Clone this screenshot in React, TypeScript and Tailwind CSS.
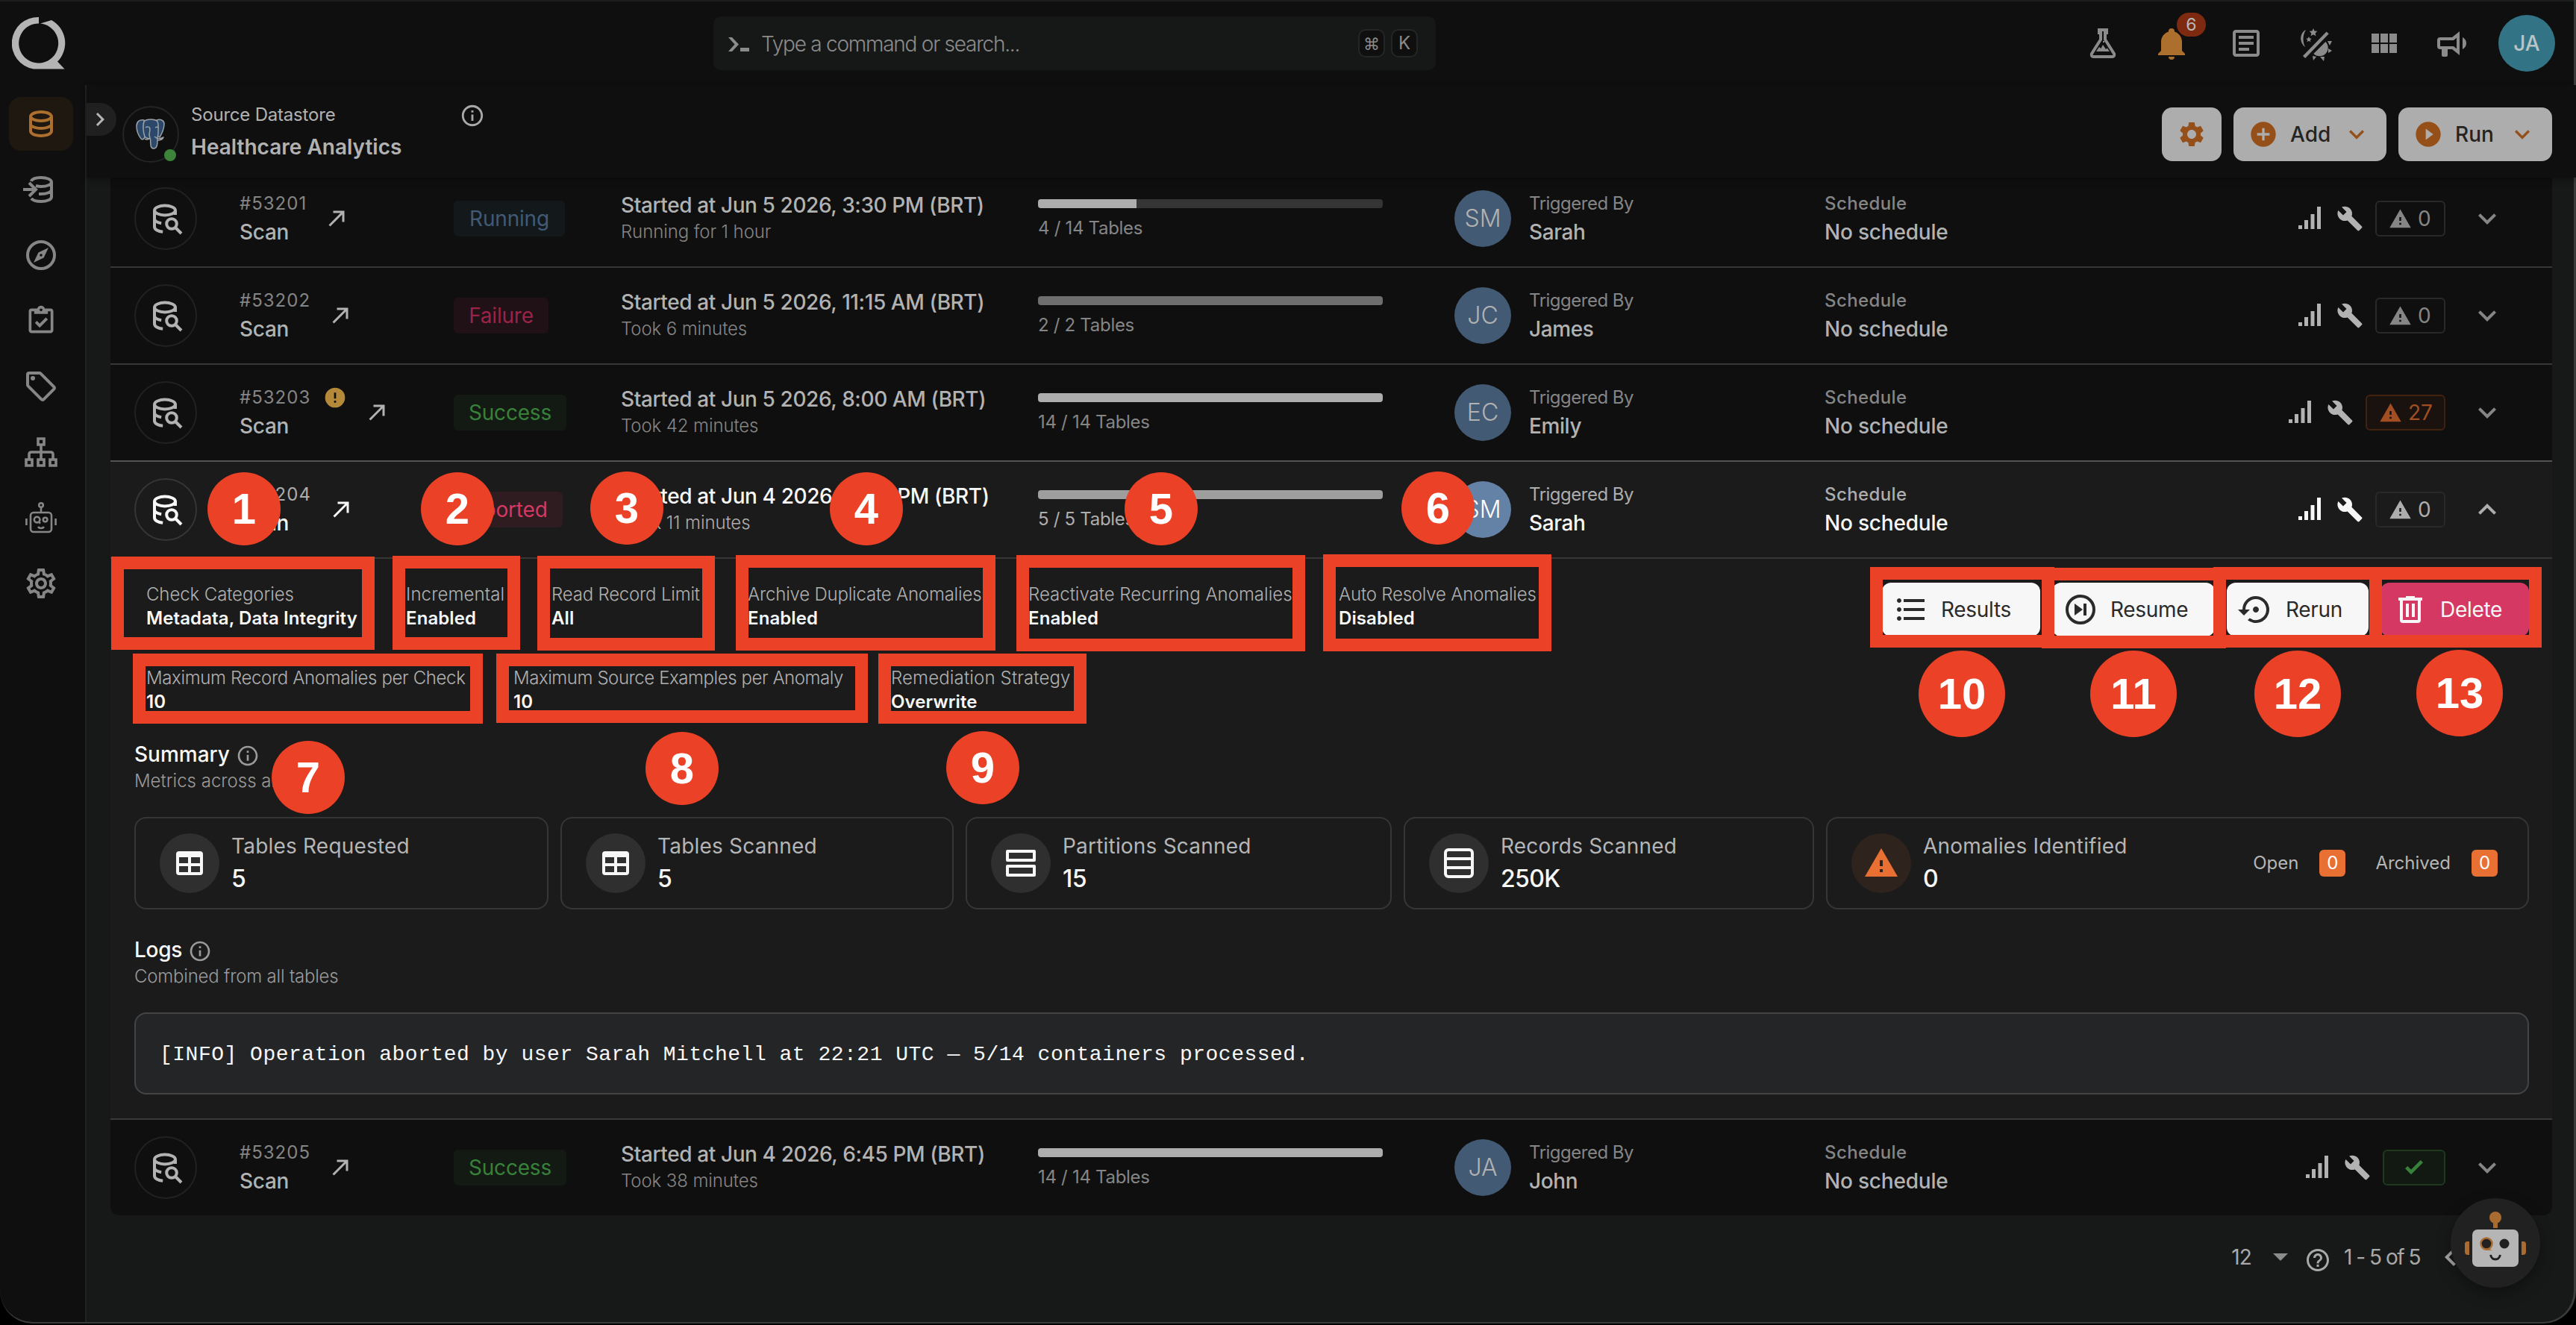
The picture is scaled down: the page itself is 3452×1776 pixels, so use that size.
import type { ReactNode } from "react";
import clsx from "clsx";
import {
  MdBuild,
  MdFormatListBulleted,
  MdHelpOutline,
  MdInfoOutline,
  MdKeyboardArrowDown,
  MdKeyboardArrowUp,
  MdOutlineArticle,
  MdOutlineSettings,
  MdSettings,
  MdSettingsBackupRestore,
  MdWarning
} from "react-icons/md";

type Run = {
  id: string;
  status: string;
  badge: string;
  started: string;
  note: string;
  progress: number;
  bar: string;
  tables: string;
  initials: string;
  user: string;
  anomalies: number | null;
  flagged?: boolean;
  open?: boolean;
};

const runs: Run[] = [
  {
    id: "#53201",
    status: "Running",
    badge: "w-[149px] bg-[#13181b] text-[#415a76]",
    started: "Started at Jun 5 2026, 3:30 PM (BRT)",
    note: "Running for 1 hour",
    progress: 28.6,
    bar: "bg-[#adadad]",
    tables: "4 / 14 Tables",
    initials: "SM",
    user: "Sarah",
    anomalies: 0
  },
  {
    id: "#53202",
    status: "Failure",
    badge: "w-[127px] bg-[#1f1115] text-[#9c2347]",
    started: "Started at Jun 5 2026, 11:15 AM (BRT)",
    note: "Took 6 minutes",
    progress: 100,
    bar: "bg-[#6e6e6e]",
    tables: "2 / 2 Tables",
    initials: "JC",
    user: "James",
    anomalies: 0
  },
  {
    id: "#53203",
    status: "Success",
    badge: "w-[151px] bg-[#131a13] text-[#38813a]",
    started: "Started at Jun 5 2026, 8:00 AM (BRT)",
    note: "Took 42 minutes",
    progress: 100,
    bar: "bg-[#adadad]",
    tables: "14 / 14 Tables",
    initials: "EC",
    user: "Emily",
    anomalies: 27,
    flagged: true
  },
  {
    id: "#53204",
    status: "Aborted",
    badge: "w-[146px] bg-[#2e1c21] text-[#d63864]",
    started: "Started at Jun 4 2026, 10:10 PM (BRT)",
    note: "Took 11 minutes",
    progress: 100,
    bar: "bg-[#9e9e9e]",
    tables: "5 / 5 Tables",
    initials: "SM",
    user: "Sarah",
    anomalies: 0,
    open: true
  },
  {
    id: "#53205",
    status: "Success",
    badge: "w-[151px] bg-[#131a13] text-[#38813a]",
    started: "Started at Jun 4 2026, 6:45 PM (BRT)",
    note: "Took 38 minutes",
    progress: 100,
    bar: "bg-[#adadad]",
    tables: "14 / 14 Tables",
    initials: "JA",
    user: "John",
    anomalies: null
  }
];

const optionRows = [
  [
    { label: "Check Categories", value: "Metadata, Data Integrity", size: "w-[284px] tracking-[-0.1px]" },
    { label: "Incremental", value: "Enabled", size: "w-[131px] tracking-[0.1px]" },
    { label: "Read Record Limit", value: "All", size: "w-[199px] tracking-[-0.2px]" },
    { label: "Archive Duplicate Anomalies", value: "Enabled", size: "w-[312px] tracking-[-0.2px]" },
    { label: "Reactivate Recurring Anomalies", value: "Enabled", size: "w-[352px] tracking-[0px]" },
    { label: "Auto Resolve Anomalies", value: "Disabled", size: "w-[266px] tracking-[-0.2px]" }
  ],
  [
    { label: "Maximum Record Anomalies per Check", value: "10", size: "w-[428px] tracking-[-0.37px]" },
    { label: "Maximum Source Examples per Anomaly", value: "10", size: "w-[442px] tracking-[-0.44px]" },
    { label: "Remediation Strategy", value: "Overwrite", size: "w-[242px] tracking-[0.15px]" }
  ]
];

// Numbered callouts laid over the page
const frames = [
  "left-[149px] top-[746px] h-[125px] w-[353px]",
  "left-[526px] top-[745px] h-[126px] w-[171px]",
  "left-[720px] top-[745px] h-[127px] w-[238px]",
  "left-[986px] top-[744px] h-[128px] w-[348px]",
  "left-[1362px] top-[744px] h-[129px] w-[387px]",
  "left-[1773px] top-[743px] h-[130px] w-[306px]",
  "left-[178px] top-[876px] h-[94px] w-[469px]",
  "left-[665px] top-[876px] h-[93px] w-[498px]",
  "left-[1177px] top-[876px] h-[94px] w-[279px]",
  "left-[2506px] top-[760px] h-[108px] w-[247px]",
  "left-[2736px] top-[761px] h-[108px] w-[247px]",
  "left-[2966px] top-[760px] h-[108px] w-[226px]",
  "left-[3175px] top-[760px] h-[108px] w-[231px]"
];

const markers = [
  "left-[278px] top-[633px]",
  "left-[564px] top-[633px]",
  "left-[791px] top-[632px]",
  "left-[1112px] top-[633px]",
  "left-[1507px] top-[633px]",
  "left-[1878px] top-[632px]",
  "left-[364px] top-[993px]",
  "left-[865px] top-[981px]",
  "left-[1268px] top-[980px]",
  "left-[2571px] top-[872px]",
  "left-[2801px] top-[872px]",
  "left-[3021px] top-[872px]",
  "left-[3238px] top-[871px]"
];

function Svg({ className, box = "0 0 24 24", children }: { className: string; box?: string; children: ReactNode }) {
  return (
    <svg aria-hidden className={clsx("shrink-0", className)} fill="currentColor" viewBox={box}>
      {children}
    </svg>
  );
}

function ScanIcon() {
  return (
    <Svg className="size-12">
      <g fill="none" stroke="currentColor" strokeWidth="2">
        <ellipse cx="11.500" cy="6.500" rx="7" ry="3.200" />
        <path d="M4.500 6.500v11c0 1.800 2.400 3.100 5.600 3.400M4.500 12c0 1.500 1.900 2.700 4.600 3.100M18.500 6.500v3" />
        <circle cx="16" cy="15.500" r="3.400" />
        <path d="m18.500 18 4 4" />
      </g>
    </Svg>
  );
}

function DatabaseIcon({ className }: { className: string }) {
  return (
    <Svg className={className}>
      <path d="M12 3C7.58 3 4 4.79 4 7v10c0 2.21 3.59 4 8 4s8-1.79 8-4V7c0-2.21-3.58-4-8-4m6 14c0 .5-2.13 2-6 2s-6-1.5-6-2v-2.23c1.61.78 3.72 1.23 6 1.23s4.39-.45 6-1.23V17m0-4.55c-1.3.95-3.58 1.55-6 1.55s-4.7-.6-6-1.55V9.64c1.47.83 3.61 1.36 6 1.36s4.53-.53 6-1.36v2.81M12 9C8.13 9 6 7.5 6 7s2.13-2 6-2 6 1.5 6 2-2.13 2-6 2z" />
    </Svg>
  );
}

function Logo() {
  return (
    <Svg box="0 0 72 72" className="size-[72px] text-[#b4b4b4]">
      <path d="M36 1A35 35 0 0 0 29 70.500H70.500L61 60.500A35 35 0 0 0 53 5L38 9.600A26.500 26.500 0 1 1 36 9.500Z" />
    </Svg>
  );
}

function Sidebar() {
  const item = "flex h-[72px] w-[86px] items-center justify-center rounded-2xl";
  return (
    <nav className="flex w-[116px] shrink-0 flex-col items-center gap-4 border-r-2 border-[#232221] bg-[#0f0f0f] pt-4 pr-1 text-[#868686]">
      <span className={clsx(item, "bg-[#1f1811] text-[#ac6f2e]")}>
        <DatabaseIcon className="size-12" />
      </span>
      <span className={item}>
        <Svg className="size-12 overflow-visible">
          <g fill="none" stroke="currentColor" strokeWidth="2">
            <path d="M5.500 6.500C6 4.900 8.700 4 12 4c4 0 7 1.300 7 3s-3 3-7 3c-1.500 0-2.500-.2-3.500-.5M19 7v10c0 1.700-3 3-7 3-3 0-5.600-.8-6.500-2M19 12c0 1.700-3 3-7 3h-1.500" />
            <path d="M0 12h7.500M4 7.500 8.500 12 4 16.500" />
          </g>
        </Svg>
      </span>
      <span className={item}>
        <Svg className="size-12">
          <circle cx="12" cy="12" fill="none" r="9" stroke="currentColor" strokeWidth="2" />
          <path d="m7 17 3.200-6.800L17 7l-3.200 6.800L7 17m5-5.900a.9.9 0 0 0-.9.9.9.9 0 0 0 .9.9.9.9 0 0 0 .9-.9.9.9 0 0 0-.9-.9z" />
        </Svg>
      </span>
      <span className={item}>
        <Svg className="size-11">
          <path d="M19 3h-4.180C14.400 1.840 13.300 1 12 1s-2.400.84-2.820 2H5c-1.100 0-2 .9-2 2v14c0 1.100.9 2 2 2h14c1.100 0 2-.9 2-2V5c0-1.100-.9-2-2-2m-7 0c.55 0 1 .45 1 1s-.45 1-1 1-1-.45-1-1 .45-1 1-1M7 7h10V5h2v14H5V5h2v2m.5 6.500L9 12l2 2 4.500-4.500L17 11l-6 6-3.500-3.500z" />
        </Svg>
      </span>
      <span className={item}>
        <Svg className="size-12">
          <path d="m21.410 11.580-9-9A2 2 0 0 0 11 2H4a2 2 0 0 0-2 2v7a2 2 0 0 0 .59 1.420l9 9A2 2 0 0 0 13 22a2 2 0 0 0 1.410-.59l7-7A2 2 0 0 0 22 13a2 2 0 0 0-.59-1.420M13 20l-9-9V4h7l9 9M6.500 5A1.500 1.500 0 1 1 5 6.500 1.500 1.500 0 0 1 6.500 5z" />
        </Svg>
      </span>
      <span className={item}>
        <Svg className="size-12">
          <g fill="none" stroke="currentColor" strokeWidth="1.800">
            <path d="M10 3h4v4h-4zM2 17h4v4H2zM10 17h4v4h-4zM18 17h4v4h-4zM12 7v10M4 17v-3.500c0-.8.500-1.500 1.500-1.500h13c1 0 1.500.7 1.500 1.500V17" />
          </g>
        </Svg>
      </span>
      <span className={item}>
        <Svg className="size-12">
          <g fill="none" stroke="currentColor" strokeWidth="1.300">
            <rect height="13" rx="2" width="14" x="5" y="8.500" />
            <circle cx="12" cy="3.500" r="1.400" />
            <path d="M12 5v3.500M2.200 12.500v4.500M21.800 12.500v4.500M10 18c.8 1.300 3.200 1.300 4 0" />
            <circle cx="9.300" cy="13.300" r="1.900" />
            <path d="m10.500 14.800 1 1" />
            <circle cx="14.800" cy="13.300" r="1.400" />
          </g>
        </Svg>
      </span>
      <span className={item}>
        <MdOutlineSettings className="size-12" />
      </span>
    </nav>
  );
}

function TopBar() {
  return (
    <header className="flex h-[114px] shrink-0 items-center border-t-2 border-[#1b1c1c] bg-[#0f0f0f] pl-4 text-[#8b8b8b]">
      <Logo />
      <div className="ml-[868px] flex h-[72px] w-[968px] items-center rounded-[10px] bg-[#161817] pr-6 pl-5">
        <Svg box="0 0 28 20" className="mt-1 h-5 w-7">
          <path d="M0 0h5l9 9.500L5 19H0l8.500-9.500z" />
          <path d="M16 14h12v5H16z" />
        </Svg>
        <span className="mt-0.5 ml-4 text-[28px] font-light tracking-[-1.250px]">Type a command or search...</span>
        <kbd className="ml-auto flex h-[38px] w-9 items-center justify-center rounded-[10px] border-2 border-[#242525] bg-[#0f0f0f] font-sans text-[22px]">
          ⌘
        </kbd>
        <kbd className="ml-2 flex h-[38px] w-9 items-center justify-center rounded-[10px] border-2 border-[#242525] bg-[#0f0f0f] font-['Inter',sans-serif] text-[24px]">
          K
        </kbd>
      </div>
      <div className="ml-auto flex items-center pr-7">
        <Svg className="size-12">
          <path
            d="M9.500 3h5v2h-1v4.500l6 9.500c.5 1-.1 2-1.200 2H5.700c-1.100 0-1.700-1-1.200-2l6-9.500V5h-1z"
            fill="none"
            stroke="currentColor"
            strokeWidth="2"
          />
          <path d="m7.500 17.500 2-3 1.200 1 1.300-2.500 2 3 .9-.8 1.600 2.300zM12 10.500h1v1h-1z" />
        </Svg>
        <span className="relative ml-[44px]">
          <Svg className="size-12 text-[#ac6f2e]">
            <path d="M21 19v1H3v-1l2-2v-6c0-3.100 2.030-5.830 5-6.710V4a2 2 0 0 1 4 0v.29c2.970.88 5 3.610 5 6.710v6l2 2m-7 2a2 2 0 0 1-4 0" />
          </Svg>
          <span className="absolute -top-[17px] left-[31px] flex h-8 w-[39px] items-center justify-center rounded-full bg-[#7d2a10] text-[23px] text-[#b9b9b9]">
            6
          </span>
        </span>
        <MdOutlineArticle className="ml-[52px] size-12" />
        <Svg className="ml-[45px] size-12">
          <path d="M5.500 3C1.500 5 .8 11 5 14.500c-1.500-3-2-7.500.5-11.500zM3.500 20.500 19.300 4.200l1.600 1.400L5.100 22z" />
          <path d="m10.500 2 .8 1.700 1.900.2-1.400 1.300.4 1.900-1.700-1-1.700 1 .4-1.900-1.400-1.300 1.900-.2zM7.500 7.500l.6 1.200 1.300.2-1 .9.3 1.300-1.200-.7-1.200.7.3-1.300-1-.9 1.300-.2z" />
          <path d="M18.700 11a5.500 5.500 0 0 1-8 8zM20 10.500l3 0-1.500 3zM20.500 15.500l2.500 1.500-2.500 1.500zM10 20.500l2.500.5L10.500 23.500zM15 21h3L17.500 24z" />
        </Svg>
        <Svg box="0 0 34 26" className="ml-[51px] h-[26px] w-[34px]">
          <path d="M0 0h10v12H0zM12 0h10v12H12zM24 0h10v12H24zM0 14h10v12H0zM12 14h10v12H12zM24 14h10v12H24z" />
        </Svg>
        <Svg className="ml-[50px] size-12">
          <path d="M12 8H4a2 2 0 0 0-2 2v4a2 2 0 0 0 2 2h1v4a1 1 0 0 0 1 1h2a1 1 0 0 0 1-1v-4h3l5 4V4l-5 4m3 7.600L13 14H4v-4h9l2-1.600v7.200m6.500-3.600c0 1.710-.96 3.260-2.500 4V8c1.530.75 2.500 2.300 2.500 4z" />
        </Svg>
        <span className="ml-[38px] flex size-[76px] items-center justify-center rounded-full bg-[#327485] text-[28px] font-medium text-[#b9c4c7]">
          JA
        </span>
      </div>
    </header>
  );
}

function StoreHeader() {
  const button = "flex h-[72px] items-center rounded-[14px] bg-[#adadad] text-[28px] font-medium";
  return (
    <div className="relative z-10 flex h-[124px] shrink-0 items-start bg-[#0f0f0f] pr-[33px] shadow-[0_3px_8px_rgba(0,0,0,0.35)]">
      <span className="mt-6 flex h-11 w-10 items-center justify-center rounded-r-full bg-[#202020] pr-1 text-[#b5b5b5]">
        <MdKeyboardArrowDown className="size-9 -rotate-90" />
      </span>
      <span className="relative mt-7 ml-2 flex size-[76px] items-center justify-center rounded-full border-2 border-[#242424]">
        <Svg box="0 0 40 42" className="h-[42px] w-10">
          <g fill="#2b486b" stroke="#9aa0a6" strokeLinejoin="round" strokeWidth="1.500">
            <path d="M11 2C5 1 1 4 1 10c0 6 3 13 6 17 2 2 4 0 5-2z" />
            <path d="M28 2c6-2 10 1 10 5 0 6-3 13-6 18l-3-2z" />
            <path d="M11 4c3-4 15-4 18 0 2 4 1 10 1 15 0 3-1 5-1 8 0 6 0 13-5 13s-4-6-4.500-13c-2 0-5 0-7.500-3-2-5-3-15-1-20z" />
            <path d="M13 12c2-2 6-1 6 2s-1 5-1 8l1 4c-3 3-6 2-7 1M26 12c2-1 3-1 4 0M25 24c3 3 7 4 12 1-1 3-5 4-8 4" fill="none" />
          </g>
        </Svg>
        <span className="absolute right-0.5 bottom-0 size-4 rounded-full bg-[#3c843a]" />
      </span>
      <div className="mt-5 ml-4 w-[362px] text-[#b2b2b2]">
        <p className="text-[24px] leading-10 tracking-[-0.200px]">Source Datastore</p>
        <p className="mt-px text-[28px] leading-[44px] font-semibold">Healthcare Analytics</p>
      </div>
      <MdInfoOutline className="mt-6 -ml-0.5 size-[34px] text-[#a9a9a9]" />
      <div className="mt-[30px] ml-auto flex gap-4">
        <span className={clsx(button, "w-20 justify-center text-[#95501a]")}>
          <MdSettings className="size-10" />
        </span>
        <span className={clsx(button, "w-[205px] pl-5 text-[#242424]")}>
          <Svg className="size-10 text-[#95501a]">
            <path d="M17 13h-4v4h-2v-4H7v-2h4V7h2v4h4m-5-9A10 10 0 0 0 2 12a10 10 0 0 0 10 10 10 10 0 0 0 10-10A10 10 0 0 0 12 2z" />
          </Svg>
          <span className="ml-4">Add</span>
          <MdKeyboardArrowDown className="mr-5 ml-auto size-10 text-[#95501a]" />
        </span>
        <span className={clsx(button, "w-[206px] pl-5 text-[#242424]")}>
          <Svg className="size-10 text-[#95501a]">
            <path d="M10 16.500v-9l6 4.500M12 2A10 10 0 0 0 2 12a10 10 0 0 0 10 10 10 10 0 0 0 10-10A10 10 0 0 0 12 2z" fillRule="evenodd" />
          </Svg>
          <span className="ml-4">Run</span>
          <MdKeyboardArrowDown className="mr-5 ml-auto size-10 text-[#95501a]" />
        </span>
      </div>
    </div>
  );
}

function AnomalyBox({ count }: { count: number | null }) {
  if (count === null) {
    return (
      <span className="flex h-12 w-[84px] items-center justify-center rounded-md border-2 border-[#1d3a1e] bg-[#121812] text-[#38813a]">
        <Svg className="size-8">
          <path d="m21 7-12 12-6-6 2.500-2.500L9 14 18.500 4.500z" />
        </Svg>
      </span>
    );
  }
  return (
    <span
      className={clsx(
        "flex h-12 items-center rounded-md border-2 pl-4 text-[28px]",
        count > 0 ? "w-[107px] border-[#43210f] bg-[#1a120e] text-[#a04e22]" : "w-[94px] border-[#292929]"
      )}
    >
      <MdWarning className="size-[31px]" />
      <span className="ml-2">{count}</span>
    </span>
  );
}

function RunRow({ run, last }: { run: Run; last?: boolean }) {
  const strong = run.open ? "text-[#f7f7f7]" : "text-[#b2b2b2]";
  const soft = run.open ? "text-[#adadad]" : "text-[#858585]";
  const Chevron = run.open ? MdKeyboardArrowUp : MdKeyboardArrowDown;
  return (
    <div
      className={clsx(
        "grid grid-cols-[141px_287px_224px_559px_558px_100px_396px_1fr] items-center pl-8",
        last ? "h-32 rounded-b-xl" : "h-[130px] border-b-2",
        run.flagged ? "border-[#555555]" : "border-[#363636]",
        run.open ? "bg-[#1b1b1b]" : "bg-[#0f0f0f]"
      )}
    >
      <span
        className={clsx(
          "flex size-[84px] items-center justify-center rounded-full border-2",
          run.open ? "border-[#353535]" : "border-[#212121]",
          strong
        )}
      >
        <ScanIcon />
      </span>
      <div className="flex items-center">
        <div>
          <div className={clsx("flex h-[37px] items-center text-[24px] tracking-[1px]", soft)}>
            {run.id}
            {run.flagged && (
              <Svg className="ml-[17px] size-8 text-[#b5893a]">
                <path d="M13 13h-2V7h2m0 10h-2v-2h2M12 2A10 10 0 0 0 2 12a10 10 0 0 0 10 10 10 10 0 0 0 10-10A10 10 0 0 0 12 2z" />
              </Svg>
            )}
          </div>
          <div className={clsx("text-[28px] leading-[41px] font-medium tracking-[-0.3px]", strong)}>Scan</div>
        </div>
        <Svg className={clsx("ml-[22px] size-9", strong)}>
          <path d="M5 17.590 15.590 7H9V5h10v10h-2V8.410L6.410 19 5 17.590z" />
        </Svg>
      </div>
      <span className={clsx("flex h-12 items-center justify-center rounded-md text-[28px] tracking-[-0.2px]", run.badge)}>
        {run.status}
      </span>
      <div>
        <p className={clsx("text-[28px] leading-9 font-medium tracking-[-0.4px]", strong)}>{run.started}</p>
        <p className={clsx("text-[24px] leading-9 font-light tracking-[-0.1px]", soft)}>{run.note}</p>
      </div>
      <div className="mt-[5px] w-[462px]">
        <div className="h-3 overflow-hidden rounded bg-[#353535]">
          <div className={clsx("h-full", run.bar)} style={{ width: `${run.progress}%` }} />
        </div>
        <p className={clsx("mt-[9px] text-[24px] leading-9 tracking-[-0.3px]", soft)}>{run.tables}</p>
      </div>
      <span
        className={clsx(
          "flex size-[76px] items-center justify-center rounded-full text-[32px] font-light",
          run.open ? "bg-[#6382a6] text-white" : "bg-[#435a74] text-[#b2b2b2]"
        )}
      >
        {run.initials}
      </span>
      <div>
        <p className={clsx("text-[24px] leading-[37px] tracking-[-0.5px]", soft)}>Triggered By</p>
        <p className={clsx("text-[28px] leading-[41px] font-medium tracking-[-0.4px]", strong)}>{run.user}</p>
      </div>
      <div className="flex items-center pr-[63px]">
        <div>
          <p className={clsx("text-[24px] leading-[37px] font-medium tracking-[0.4px]", soft)}>Schedule</p>
          <p className={clsx("text-[28px] leading-[41px] font-medium tracking-[-0.2px]", strong)}>No schedule</p>
        </div>
        <div className={clsx("ml-auto flex items-center", soft)}>
          <Svg box="0 0 30 30" className={clsx("mb-0.5 size-[30px]", strong)}>
            <path d="M0 25h5v5H0zM8 18h5v12H8zM16.500 10h5v20h-5zM25 0h5v30h-5z" />
          </Svg>
          <MdBuild className={clsx("mr-4 ml-[21px] size-9", strong)} />
          <AnomalyBox count={run.anomalies} />
          <Chevron className="ml-8 size-12" />
        </div>
      </div>
    </div>
  );
}

function SummaryCard({ title, value, width, icon, children, warn }: {
  title: string;
  value: string;
  width: string;
  icon: ReactNode;
  children?: ReactNode;
  warn?: boolean;
}) {
  return (
    <div className={clsx("flex h-[124px] items-center rounded-2xl border-2 border-[#363636] pl-8", width)}>
      <span
        className={clsx(
          "flex size-20 items-center justify-center rounded-full",
          warn ? "bg-[#2f231d] text-[#e87033]" : "bg-[#2f2f2f] text-[#f7f7f7]"
        )}
      >
        {icon}
      </span>
      <div className="ml-4">
        <p className="text-[28px] leading-[42px] tracking-[0.2px] text-[#b5b5b5]">{title}</p>
        <p className="text-[32px] leading-[46px] font-medium tracking-[-0.6px] text-[#f7f7f7]">{value}</p>
      </div>
      {children}
    </div>
  );
}

function ExpandedRun() {
  const action = "flex h-[72px] items-center rounded-xl text-[28px] tracking-[-0.3px]";
  const light = "bg-[#f7f7f7] text-[#2b2b2b]";
  return (
    <section className="h-[752px] border-b-2 border-[#3a3a3a] bg-[#1b1b1b] pt-8 pr-[31px] pl-8">
      <div className="flex justify-between">
        <div className="flex flex-col gap-12 pl-4">
          {optionRows.map((row) => (
            <div className="flex gap-16" key={row[0].label}>
              {row.map((option) => (
                <div className={clsx("text-[24px] leading-8 whitespace-nowrap", option.size)} key={option.label}>
                  <p className="font-light text-[#b0b0b0]">{option.label}</p>
                  <p className="font-semibold tracking-[0.1px] text-[#f7f7f7]">{option.value}</p>
                </div>
              ))}
            </div>
          ))}
        </div>
        <div className="flex gap-4">
          <span className={clsx(action, light, "w-[212px]")}>
            <MdFormatListBulleted className="ml-[15px] size-12" />
            <span className="ml-4">Results</span>
          </span>
          <span className={clsx(action, light, "w-[218px]")}>
            <Svg className="ml-3.5 size-12">
              <circle cx="12" cy="12" fill="none" r="9" stroke="currentColor" strokeWidth="2" />
              <path d="m8 8 5.500 4L8 16zM14 8h2v8h-2z" />
            </Svg>
            <span className="ml-4">Resume</span>
          </span>
          <span className={clsx(action, light, "w-[190px]")}>
            <MdSettingsBackupRestore className="ml-[15px] size-12" />
            <span className="ml-4">Rerun</span>
          </span>
          <span className={clsx(action, "w-[199px] bg-[#d63864] text-[#f7f7f7]")}>
            <Svg className="ml-4 size-12">
              <path d="M9 3v1H4v2h1v13a2 2 0 0 0 2 2h10a2 2 0 0 0 2-2V6h1V4h-5V3H9M7 6h10v13H7V6m2 2v9h2V8H9m4 0v9h2V8h-2z" />
            </Svg>
            <span className="ml-4">Delete</span>
          </span>
        </div>
      </div>

      <div className="mt-9 flex h-9 items-center gap-2 text-[28px] font-medium text-[#f7f7f7]">
        Summary <MdInfoOutline className="mt-1 size-8 text-[#9a9a9a]" />
      </div>
      <p className="text-[24px] leading-9 font-light text-[#9a9a9a]">Metrics across all tables</p>

      <div className="mt-[30px] flex gap-4">
        <SummaryCard icon={<TableIcon />} title="Tables Requested" value="5" width="w-[555px]" />
        <SummaryCard icon={<TableIcon />} title="Tables Scanned" value="5" width="w-[527px]" />
        <SummaryCard
          icon={
            <Svg box="0 0 40 36" className="h-9 w-10">
              <path d="M2 2h36v12H2zM2 22h36v12H2z" fill="none" stroke="currentColor" strokeLinejoin="round" strokeWidth="4" />
            </Svg>
          }
          title="Partitions Scanned"
          value="15"
          width="w-[571px]"
        />
        <SummaryCard
          icon={
            <Svg box="0 0 40 40" className="size-10">
              <path d="M2 14h36M2 26h36" stroke="currentColor" strokeWidth="4" />
              <rect fill="none" height="36" rx="4" stroke="currentColor" strokeWidth="4" width="36" x="2" y="2" />
            </Svg>
          }
          title="Records Scanned"
          value="250K"
          width="w-[550px]"
        />
        <SummaryCard icon={<MdWarning className="size-12" />} title="Anomalies Identified" value="0" warn width="w-[942px]">
          <div className="ml-auto flex items-center pr-10 text-[24px] text-[#b5b5b5]">
            Open
            <span className="ml-7 flex h-9 w-[35px] items-center justify-center rounded-md bg-[#e87033] text-white">0</span>
            <span className="ml-10">Archived</span>
            <span className="ml-7 flex h-9 w-[35px] items-center justify-center rounded-md bg-[#e87033] text-white">0</span>
          </div>
        </SummaryCard>
      </div>

      <div className="mt-9 flex h-9 items-center gap-2 text-[28px] font-medium tracking-[-0.3px] text-[#f7f7f7]">
        Logs <MdInfoOutline className="mt-1 size-8 text-[#9a9a9a]" />
      </div>
      <p className="text-[24px] leading-9 font-light tracking-[-0.2px] text-[#9a9a9a]">Combined from all tables</p>
      <div className="mt-[30px] flex h-[110px] items-center rounded-2xl border-2 border-[#434445] bg-[#242527] pt-1 pl-8 font-['Liberation_Mono',monospace] text-[28px] tracking-[0.500px] text-[#f7f7f7]">
        [INFO] Operation aborted by user Sarah Mitchell at 22:21 UTC — 5/14 containers processed.
      </div>
    </section>
  );
}

function TableIcon() {
  return (
    <Svg className="size-12">
      <path d="M5 4h14a2 2 0 0 1 2 2v12a2 2 0 0 1-2 2H5a2 2 0 0 1-2-2V6a2 2 0 0 1 2-2m0 4v4h6V8H5m8 0v4h6V8h-6m-8 6v4h6v-4H5m8 0v4h6v-4h-6z" />
    </Svg>
  );
}

function Assistant() {
  return (
    <div className="absolute top-[1606px] left-[3284px] flex size-[120px] items-center justify-center rounded-full bg-[#212121] shadow-[0_8px_20px_rgba(0,0,0,0.35)]">
      <Svg box="0 0 84 76" className="-mt-3 h-[76px] w-[84px]">
        <g fill="#a96b30">
          <ellipse cx="42" cy="10" rx="8" ry="8" />
          <path d="M39 16h6v8h-6zM7 42v18H5c-3 0-4-2-4-4V46c0-3 1-4 4-4zM77 42v18h2c3 0 4-2 4-4V46c0-3-1-4-4-4z" />
        </g>
        <rect fill="#b5b5b5" height="50" rx="7" width="62" x="11" y="26" />
        <circle cx="30" cy="45" fill="#212121" r="7.500" stroke="#a96b30" strokeWidth="2.500" />
        <path d="m33 52 5 2H27z" fill="#a96b30" />
        <circle cx="54" cy="45" fill="#212121" r="6.500" />
        <path d="M35.500 60c2 8 11 8 13 0" fill="none" stroke="#212121" strokeWidth="3" />
      </Svg>
    </div>
  );
}

export default function App() {
  return (
    <div className="relative flex h-[1776px] w-[3452px] flex-col overflow-hidden bg-black font-['Inter',sans-serif]">
      <TopBar />
      <div className="flex h-[1660px] shrink-0">
        <Sidebar />
        <main className="flex grow flex-col bg-[#171918]">
          <StoreHeader />
          <div className="-mt-[9px] mr-[33px] ml-8 flex flex-col">
            {runs.map((run, i) => (
              <div key={run.id}>
                <RunRow last={i === runs.length - 1} run={run} />
                {run.open && <ExpandedRun />}
              </div>
            ))}
          </div>
          <div className="flex h-28 items-center justify-end pr-[145px] text-[28px] text-[#a9a9a9]">
            <span className="tracking-[-0.8px]">12</span>
            <Svg box="0 0 20 10" className="ml-[29px] h-2.5 w-5 text-[#8b8b8b]">
              <path d="M0 0h20L10 10z" />
            </Svg>
            <MdHelpOutline className="mt-2 ml-[22px] size-9" />
            <span className="ml-[17px] tracking-[-1.500px]">1 - 5 of 5</span>
            <MdKeyboardArrowDown className="ml-[17px] size-12 rotate-90" />
          </div>
        </main>
      </div>

      {/* window edge */}
      <div className="pointer-events-none absolute inset-x-0 top-0 h-[1774px] rounded-b-[44px] border-r-[3px] border-b-2 border-[#3a3b3b] shadow-[0_0_0_60px_#000] [clip-path:inset(0_0_-4px_0)]" />

      <Assistant />

      {frames.map((place) => (
        <div className={clsx("absolute border-[17px] border-[#eb4126]", place)} key={place} />
      ))}
      {markers.map((place, i) => (
        <div
          className={clsx(
            "absolute flex items-center justify-center rounded-full bg-[#eb4126] font-['Liberation_Sans',sans-serif] text-[58px] leading-none font-bold text-white",
            i < 9 ? "size-[98px]" : "size-[116px]",
            place
          )}
          key={place}
        >
          {i + 1}
        </div>
      ))}
    </div>
  );
}
